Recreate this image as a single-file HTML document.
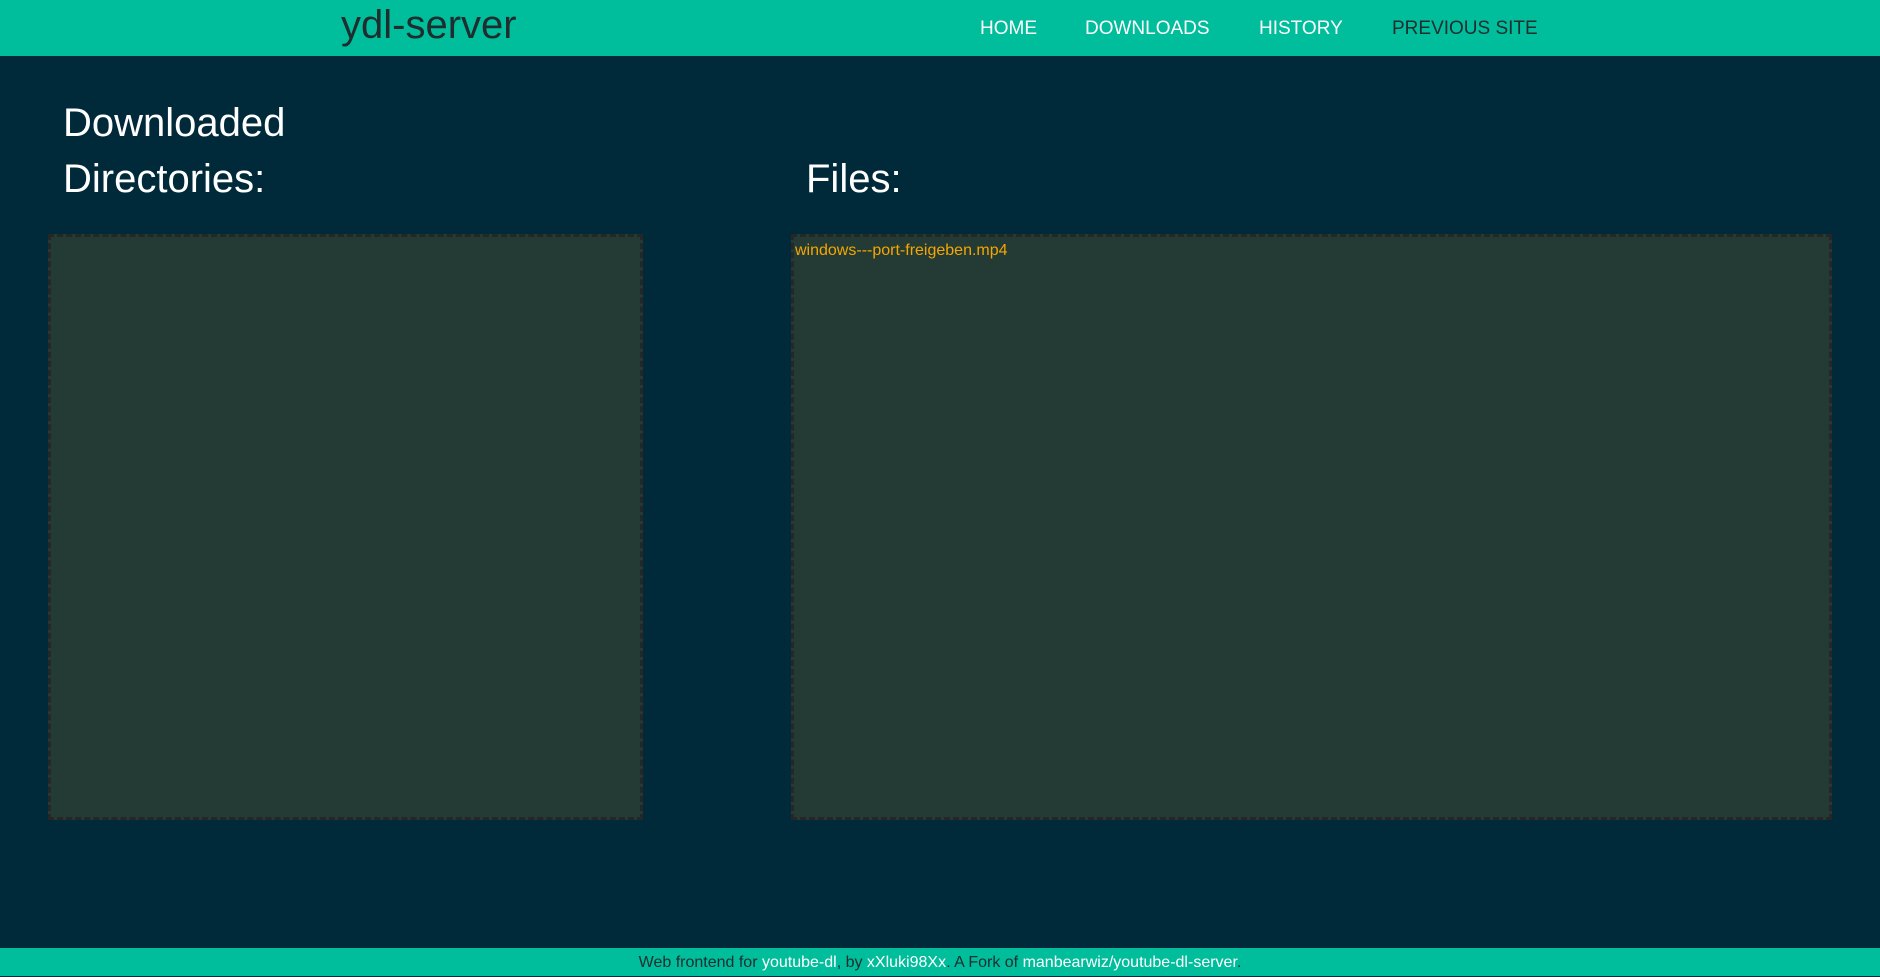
<!DOCTYPE html>
<html><head><style>
*{margin:0;padding:0;box-sizing:border-box}
body{width:1880px;height:976px;background:#002a3a;font-family:"Liberation Sans",sans-serif;position:relative;overflow:hidden}
.hdr{position:absolute;left:0;top:0;width:1880px;height:56px;background:#00bd9b}
.title{position:absolute;left:341px;top:1px;font-size:40px;line-height:48px;color:#1f2d2f}
.nav{position:absolute;top:18px;font-size:19px;line-height:22px;color:#fff}
h2{position:absolute;font-weight:normal;font-size:40px;line-height:56px;color:#fff}
.box{position:absolute;background:#233a35;border:3px dashed #262626}
.file{position:absolute;left:795px;top:242px;font-size:16px;color:#f5a700}
.ftr{position:absolute;left:0;top:948px;width:1880px;height:28px;background:#00bd9b;text-align:center;font-size:16px;line-height:29px;color:#1f2d2f}
.ftr span{color:#fff}
</style></head><body>
<div class="hdr">
<div class="title">ydl-server</div>
<div class="nav" style="left:980px">HOME</div>
<div class="nav" style="left:1085px">DOWNLOADS</div>
<div class="nav" style="left:1259px">HISTORY</div>
<div class="nav" style="left:1392px;color:#1f2d2f">PREVIOUS SITE</div>
</div>
<h2 style="left:63px;top:95px">Downloaded<br>Directories:</h2>
<h2 style="left:806px;top:151px">Files:</h2>
<div class="box" style="left:48px;top:234px;width:595px;height:586px"></div>
<div class="box" style="left:791px;top:234px;width:1041px;height:586px"></div>
<div class="file">windows---port-freigeben.mp4</div>
<div class="ftr">Web frontend for <span>youtube-dl</span>, by <span>xXluki98Xx</span>. A Fork of <span>manbearwiz/youtube-dl-server</span>.</div>
</body></html>
